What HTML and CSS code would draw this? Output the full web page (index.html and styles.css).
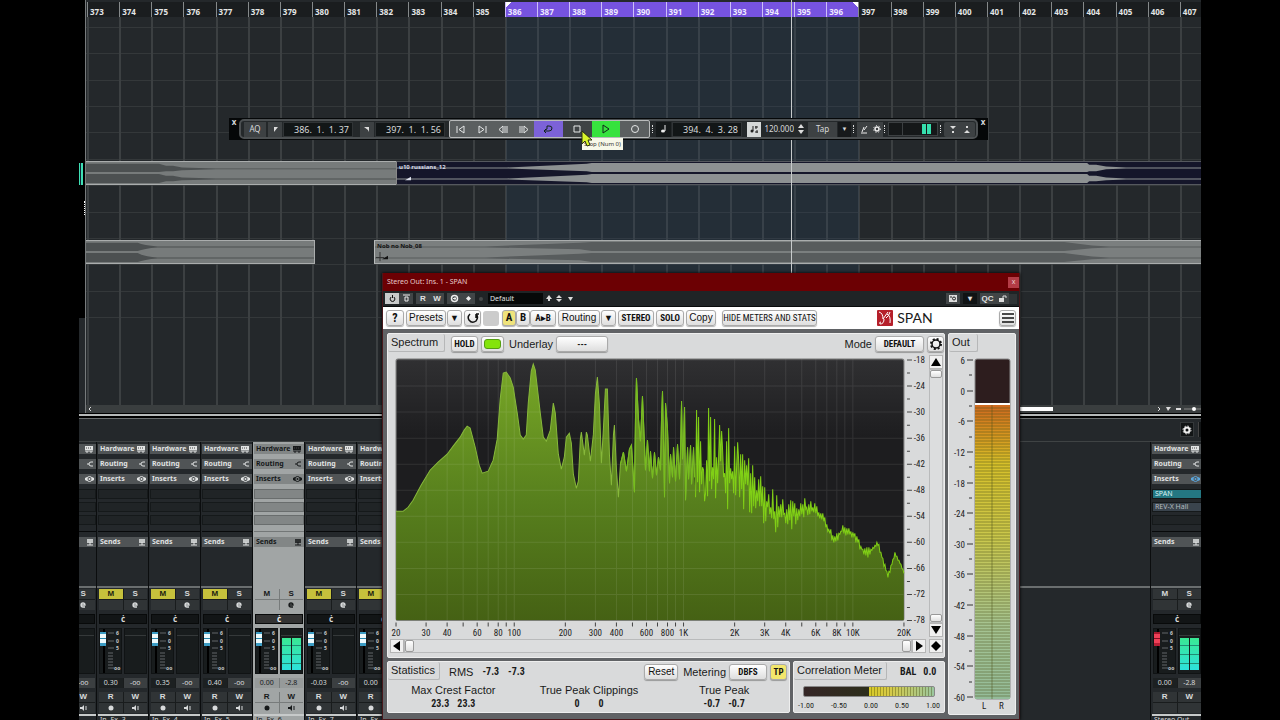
FILE: index.html
```html
<!DOCTYPE html>
<html lang="en">
<head>
<meta charset="utf-8">
<title>Project – Stereo Out</title>
<link rel="stylesheet" href="styles.css">
</head>
<body>
<main class="screen">
  <section class="arrange" aria-label="Arrangement">
    <div class="track-edge"><i class="edge-meter"></i><i class="edge-dots"></i></div>
    <div class="timeline">
      <div class="ruler" id="ruler"></div>
      <div class="lanes">
        <div class="bars" id="bars"></div>
        <div class="rows" id="rows"></div>
      </div>
      <div class="loop-area"></div>
      <div class="clip clip-a"><svg viewBox="0 0 310 24" preserveAspectRatio="none"><path fill="#4c5051" d="M0 2H73L80 4H87L96 6L130 7H310V8H130L96 9L87 10H80L73 11H0ZM0 13H73L80 15H87L96 17L130 18H310V19H130L96 20L87 21H80L73 23H0Z"/></svg></div>
      <div class="clip clip-b"><svg viewBox="0 0 805 24" preserveAspectRatio="none"><path fill="#8d9192" d="M0 6H110L190 2L195 1H691L693 3H700L710 5L730 6H805V7H730L710 8L700 10H693L691 11H195L190 10L110 7H0ZM0 18H110L190 14L195 13H691L693 15H700L710 17L730 18H805V19H730L710 20L700 21H693L691 23H195L190 22L110 19H0Z"/><path fill="#dfe3ee" d="M8 20L14 16V20Z"/></svg><span>u10 russians_12</span></div>
      <div class="clip clip-a clip-c"><svg viewBox="0 0 229 24" preserveAspectRatio="none"><path fill="#4c5051" d="M0 2H52Q58 5 72 6H229V7H72Q58 8 52 11H0ZM0 13H52Q58 17 72 18H229V19H72Q58 20 52 23H0Z"/></svg></div>
      <div class="clip clip-d"><svg viewBox="0 0 827 24" preserveAspectRatio="none"><path fill="#585c5d" d="M0 6H110L205 2L217 1H690L718 5L735 6H827V7H735L718 8L690 11H217L205 9L110 7H0ZM0 18H110L205 14L217 13H690L718 17L735 18H827V19H735L718 20L690 23H217L205 21L110 19H0Z"/><path d="M5 12V22M1 18H9" stroke="#333" fill="none"/><path fill="#111" d="M7 20L13 16V20Z"/></svg><span>Nob no Nob_08</span></div>
      <div class="playhead"></div>
      <div class="hscroll">
        <svg width="6" height="6"><path d="M4 1L2 3L4 5" stroke="#ddd" fill="none"/></svg>
        <i class="hthumb"></i>
        <svg width="44" height="6"><path d="M1 1L3 3L1 5" stroke="#ddd" fill="none"/><path d="M9 1H14L11 5ZM19 2H24V4H19Z" fill="#ddd"/><path d="M27 3H44" stroke="#888"/><circle cx="37" cy="3" r="2" fill="#fff"/></svg>
      </div>
    </div>

    <div class="transport">
      <button class="t-close" aria-label="Close left">x</button>
      <div class="t-body">
        <button class="t-btn w-aq">AQ</button>
        <button class="t-btn w-mark" aria-label="Left locator"><svg width="8" height="9"><path d="M2 2H7L3 7V2" fill="#ddd"/></svg></button>
        <input class="t-field" aria-label="Left position" value="386.  1.  1. 37">
        <button class="t-btn w-mark second" aria-label="Right locator"><svg width="8" height="9"><path d="M1 2H6V7L5 5Z" fill="#ddd"/></svg></button>
        <input class="t-field" aria-label="Right position" value="397.  1.  1. 56">
        <div class="t-group">
          <button aria-label="Previous"><svg width="10" height="9"><path d="M1 1V8M8 1V8L3 4.500Z"/></svg></button>
          <button aria-label="Next"><svg width="10" height="9"><path d="M9 1V8M2 1V8L7 4.500Z"/></svg></button>
          <button aria-label="Rewind"><svg width="10" height="9"><path d="M9 1V8M7 1V8M5 1V8L1 4.500Z"/></svg></button>
          <button aria-label="Forward"><svg width="10" height="9"><path d="M1 1V8M3 1V8M5 1V8L9 4.500Z"/></svg></button>
          <button class="wide cycle" aria-label="Cycle"><svg width="12" height="10"><path d="M2 7H7Q10 7 10 4Q10 2 7 2H5V5M5 5L3 6M2 7L4 9M2 7L4 5"/></svg></button>
          <button class="wide stop" aria-label="Stop"><svg width="10" height="10"><path d="M2 2H8V8H2Z"/></svg></button>
          <button class="wide play" aria-label="Play"><svg width="10" height="10"><path d="M2 1V9L8 5Z"/></svg></button>
          <button class="wide" aria-label="Record"><svg width="10" height="10"><circle cx="5" cy="5" r="3.500"/></svg></button>
        </div>
        <i class="dots"></i>
        <button class="t-btn w-note" aria-label="Note format"><svg width="8" height="10"><ellipse cx="3" cy="7" rx="2" ry="1.500" fill="#eee"/><path d="M5 1V7" stroke="#eee"/></svg></button>
        <input class="t-field" aria-label="Time" value="394.  4.  3. 28">
        <button class="t-btn tempo-icon" aria-label="Tempo track"><svg width="10" height="10"><circle cx="3" cy="7" r="1.500" fill="#222"/><path d="M4 2V7M6 3H9M7 2V5M6 8H9M8 6V9" stroke="#222"/></svg></button>
        <input class="tempo" aria-label="Tempo" value="120.000">
        <svg class="spin" width="6" height="10"><path d="M0 4L3 0L6 4ZM0 6L3 10L6 6Z" fill="#ddd"/></svg>
        <button class="t-btn w-tap">Tap</button>
        <button class="t-menu" aria-label="Tempo menu">▼</button>
        <i class="dots"></i>
        <button class="t-btn w-met" aria-label="Metronome"><svg width="10" height="10"><path d="M2 9H8M3 8L5 3M5 6L8 2" stroke="#eee" fill="none"/></svg></button>
        <button class="t-btn w-met" aria-label="Click settings"><svg width="10" height="10"><circle cx="5" cy="5" r="2" stroke="#eee" stroke-width="1.500" fill="none"/><circle cx="5" cy="5" r="3.500" stroke="#eee" stroke-dasharray="1 2" fill="none"/></svg></button>
        <i class="dots"></i>
        <div class="t-meter"><i></i><i></i></div>
        <i class="dots"></i>
        <div class="t-fold"><svg width="26" height="10"><path d="M3 2H9L6 5ZM5 7H7V9H5ZM17 9H23L20 6ZM19 2H21V4H19Z" fill="#ddd"/></svg></div>
      </div>
      <button class="t-close" aria-label="Close right">x</button>
    </div>
    <div class="tooltip">Stop (Num 0)</div>
    <svg class="cursor" width="12" height="17" viewBox="0 0 12 17"><path d="M1 1L11 10L7 10L9 15L6 16L4 11L1 14Z" fill="#d9f52a" stroke="#2a3010"/></svg>
  </section>

  <section class="mixer" aria-label="MixConsole">
    <div class="mix-bar"><button aria-label="Mixer settings"><svg width="10" height="10"><circle cx="5" cy="5" r="2.500" fill="none" stroke="#eee" stroke-width="2"/><circle cx="5" cy="5" r="4" fill="none" stroke="#eee" stroke-dasharray="1.500 1.640"/></svg></button><i></i></div>
    <div class="strips" id="strips"></div>
    <span class="below">Initial Delay</span>
  </section>

  <section class="plugin" aria-label="SPAN">
    <header class="titlebar"><h1>Stereo Out: Ins. 1 - SPAN</h1><button aria-label="Close">x</button></header>
    <div class="hostbar">
      <button class="on" aria-label="Power"><svg width="9" height="9"><path d="M3 3Q1 5 3 7Q5 8 6 7Q8 5 6 3M4.500 1V4" stroke="#111" fill="none"/></svg></button>
      <button aria-label="Bypass"><svg width="9" height="9"><path d="M1 1H8M3 3H6V7H3Z" stroke="#eee" fill="none"/></svg></button>
      <button class="push">R</button><button>W</button>
      <button class="push" aria-label="Side-chain"><svg width="9" height="9"><circle cx="4.500" cy="4.500" r="3" stroke="#eee" stroke-width="1.500" fill="none"/><path d="M3 4.500H6M5 3V6" stroke="#eee"/></svg></button>
      <button aria-label="Routing"><svg width="9" height="9"><path d="M2 4.500L4.500 2L7 4.500L4.500 7Z" fill="#eee"/></svg></button>
      <i class="lamp"></i>
      <select aria-label="Preset"><option>Default</option></select>
      <svg class="preset-arrows" width="30" height="9"><path d="M0 5L3 1L6 5H4V7H2V5ZM10 4L13 1L16 4ZM10 5H16L13 8Z" fill="#ddd"/><path d="M22 3H27L24.500 7Z" fill="#ddd"/></svg>
      <span class="grow"></span>
      <button aria-label="Snapshot"><svg width="10" height="9"><path d="M1 1H9V8H1Z" fill="#ddd"/><circle cx="6" cy="4.500" r="1.500" fill="none" stroke="#222"/><path d="M2 3H4" stroke="#222"/></svg></button>
      <button class="dark">▾</button>
      <button class="qc">QC</button><button aria-label="Lock"><svg width="9" height="9"><path d="M1 4H6V8H1Z" fill="#ddd"/><path d="M5 4V2H8V4" fill="none" stroke="#ddd"/></svg></button><i class="blank"></i>
    </div>
    <div class="toolbar">
      <button class="k w20">?</button>
      <button class="k plain presets">Presets</button><button class="k w14">▼</button>
      <button class="k w18 undo" aria-label="Undo"><svg width="14" height="14"><path d="M4 3Q1 6 3 9Q6 13 10 10Q13 6 10 3M10 3V7M10 3H13" stroke="#111" stroke-width="1.500" fill="none"/></svg></button><i class="gone"></i>
      <button class="k ab yellow">A</button><button class="k ab">B</button><button class="k w26">A▸B</button>
      <button class="k plain routing">Routing</button><button class="k w14">▼</button>
      <button class="k stereo">STEREO</button><button class="k solo">SOLO</button><button class="k plain copy">Copy</button>
      <button class="k hide">HIDE METERS AND STATS</button>
      <div class="brand"><svg width="16" height="16"><rect width="16" height="16" rx="1" fill="#b51f2a"/><path d="M2 2Q6 3 6 9L11 2M7 9Q7 14 3 14Q2 12 4 12M9 8Q12 6 13 2M10 4Q14 6 13 13" stroke="#fff" fill="none"/></svg><b>SPAN</b></div>
      <button class="k w18 menu" aria-label="Menu"><svg width="14" height="12"><path d="M1 2H13M1 6H13M1 10H13" stroke="#111" stroke-width="1.500"/></svg></button>
    </div>
    <div class="panels">
      <div class="left">
        <section class="panel spectrum">
          <div class="head">
            <h2 class="tab">Spectrum</h2>
            <button class="k hold">HOLD</button>
            <button class="k led" aria-label="Underlay on"><i></i></button>
            <label for="underlay">Underlay</label><button class="k" id="underlay">---</button>
            <span class="grow"></span>
            <label for="mode">Mode</label><button class="k" id="mode">DEFAULT</button>
            <button class="k gear" aria-label="Mode settings"><svg width="14" height="14"><circle cx="7" cy="7" r="4" stroke="#111" stroke-width="1.500" fill="none"/><circle cx="7" cy="7" r="5" stroke="#111" stroke-width="2" stroke-dasharray="2 1.930" fill="none"/></svg></button>
          </div>
          <div class="plotrow">
            <svg id="chart" viewBox="0 0 536 283" role="img" aria-label="Spectrum"></svg>
            <div class="vslide"><button aria-label="Up"><svg width="12" height="12"><path d="M1 10L6 2L11 10Z"/></svg></button><div class="rail"><i></i><i></i></div><button aria-label="Down"><svg width="12" height="12"><path d="M1 2L6 10L11 2Z"/></svg></button></div>
          </div>
          <div class="hslide"><button aria-label="Left"><svg width="12" height="12"><path d="M9 1L2 6L9 11Z"/></svg></button><div class="rail"><i></i><i></i></div><button aria-label="Right"><svg width="12" height="12"><path d="M3 1L10 6L3 11Z"/></svg></button><button aria-label="Reset view" class="dia"><svg width="12" height="12"><path d="M6 1L11 6L6 11L1 6Z"/></svg></button></div>
        </section>
        <div class="bottom">
          <section class="panel stats">
            <div class="head low"><h2 class="tab">Statistics</h2><span class="lbl">RMS</span><span class="num">-7.3</span><span class="num">-7.3</span><span class="grow"></span><button class="k plain reset">Reset</button><label for="dbfs">Metering</label><button class="k" id="dbfs">DBFS</button><button class="k yellow tp">TP</button></div>
            <div class="cols">
              <div class="c1"><p>Max Crest Factor</p><p class="num">23.3<span>23.3</span></p></div>
              <div class="c2"><p>True Peak Clippings</p><p class="num gap">0<span>0</span></p></div>
              <div class="c3"><p>True Peak</p><p class="num">-0.7<span>-0.7</span></p></div>
            </div>
          </section>
          <section class="panel corr">
            <div class="head low"><h2 class="tab">Correlation Meter</h2><span class="num">BAL</span><span class="num">0.0</span></div>
            <div class="cbar"><i></i></div>
            <div class="cscale"><span>-1.00</span><span>-0.50</span><span>0.00</span><span>0.50</span><span>1.00</span></div>
          </section>
        </div>
      </div>
      <section class="panel out">
        <h2 class="tab">Out</h2>
        <svg id="meter" viewBox="0 0 66 362" role="img" aria-label="Output level"></svg>
      </section>
    </div>
  </section>
</main>
<script src="app.js"></script>
</body>
</html>
```
FILE: styles.css
```css
* { box-sizing: border-box; }
body { margin: 0; background: #000; color: #d8dadb; font-family: "Noto Sans", "Open Sans", sans-serif; font-size: 8px; line-height: 10px; }
button, input, select { font: inherit; color: inherit; margin: 0; padding: 0; border: 0; background: none; border-radius: 0; min-width: 0; }
button { display: flex; align-items: center; justify-content: center; flex: none; white-space: nowrap; }
h1, h2, p { margin: 0; font-weight: 400; }
svg { display: block; flex: none; }
i { display: block; flex: none; }
.grow { flex: 1; }
.screen { position: relative; height: 100vh; margin: 0 79px; display: flex; flex-direction: column; overflow: hidden; background: #24282b; }

/* arrangement */
.arrange { position: relative; flex: none; height: 413px; display: flex; background: #24282b; }
.track-edge { width: 7px; border-right: 1px solid #777b7c; background: linear-gradient(#000 318px, #24282b 318px); padding-top: 163px; }
.edge-meter { width: 4px; height: 22px; border: solid #3fdfb4; border-width: 0 2px 0 1px; background: #123; }
.edge-dots { height: 14px; margin-top: 16px; border-right: 1px dotted #fff; }
.timeline { position: relative; flex: 1; min-width: 0; overflow: hidden; display: flex; flex-direction: column; }
.ruler { display: grid; grid-template-columns: repeat(35, 1fr); margin: 2px -11px 0 1px; height: 15px; background: #1a1d1f; font-weight: 700; color: #e4e6e6; }
.ruler span { border-left: 1px solid #85898a; padding: 5px 0 0 2px; }
.ruler .loop { background: #7653e0; border-color: #cdbff8; color: #efeaff; }
.ruler .loop-first { background: linear-gradient(135deg, #fff 4px, #7653e0 4px); }
.ruler .loop-last { background: linear-gradient(225deg, #fff 4px, #7653e0 4px); }
.lanes { position: relative; flex: 1; display: flex; flex-direction: column; }
.bars { position: absolute; inset: 0 -11px 0 1px; display: grid; grid-template-columns: repeat(35, 1fr); }
.bars span { border-left: 2px solid #3c4042; }
.rows { height: 291px; margin-top: 10px; display: grid; grid-template-rows: repeat(11, 1fr); border-bottom: 1px solid #34383a; }
.rows span { border-top: 1px solid #34383a; }
.loop-area { position: absolute; left: 420px; width: 353px; top: 17px; bottom: 8px; background: rgba(42, 72, 105, .2); }
.clip { position: absolute; height: 24px; overflow: hidden; }
.clip svg { width: 100%; height: 100%; }
.clip span { position: absolute; left: 2px; top: 1px; font-size: 6px; font-weight: 700; line-height: 8px; }
.clip-a { left: 0; top: 161px; width: 310px; background: #777b7b; border-block: 1px solid #aaadad; }
.clip-b { left: 310px; right: 0; top: 161px; background: #15162a; border-block: 1px solid #55585e; border-left: 1px solid #888; color: #d7d9e8; }
.clip-c { top: 240px; width: 229px; border-right: 1px solid #aaadad; }
.clip-d { left: 288px; right: 0; top: 240px; background: #7b7f7f; border-block: 1px solid #aaadad; border-left: 1px solid #b8bbbb; color: #111; }
.playhead { position: absolute; left: 705px; top: 0; bottom: 8px; width: 1px; background: #c7cacb; }
.hscroll { position: relative; height: 8px; display: flex; align-items: center; background: #3a3e3f; padding-left: 1px; }
.hthumb { flex: 1; height: 4px; margin-right: 104px; background: linear-gradient(90deg, transparent 50%, #fff 50%); }

/* transport */
.transport { position: absolute; left: 150px; top: 118px; width: 759px; height: 22px; display: flex; background: #050708; }
.t-close { width: 10px; align-self: flex-start; font-size: 8px; font-weight: 700; line-height: 8px; }
.t-body { flex: 1; min-width: 0; display: flex; align-items: center; gap: 1px; height: 20px; align-self: center; padding: 0 1px 0 3px; border: 2px solid #4c5052; border-radius: 5px; background: #24282a; }
.t-btn { height: 15px; background: #3d4143; }
.w-aq { width: 22px; margin-right: 1px; }
.w-mark { width: 14px; }
.second { margin-left: 6px; }
.t-field { width: 70px; height: 15px; background: #121617; border: 1px solid #303436; text-align: right; padding-right: 3px; font-size: 9px; }
.t-group { display: flex; width: 201px; height: 18px; margin-left: 3px; border: 1px solid #b9bbbb; background: #5b5f60; border-radius: 2px; flex: none; }
.t-group button { width: 21px; height: 16px; }
.t-group .wide { width: auto; flex: 1; }
.t-group path, .t-group circle { fill: none; stroke: #e6e8e8; }
.t-group .cycle { background: #7c62d8; }
.t-group .cycle path, .t-group .play path { stroke: #10241a; }
.t-group .stop { background: #3f4345; }
.t-group .play { background: #37e23e; }
.dots { height: 8px; width: 3px; border-left: 1px dotted #ddd; margin-left: 1px; }
.w-note { width: 15px; background: #15191a; }
.tempo-icon { width: 14px; background: #d5d8d8; margin-left: 4px; }
.tempo { width: 32px; text-align: right; font-size: 8px; }
.spin { margin: 0 3px; }
.w-tap { width: 29px; }
.t-menu { width: 13px; height: 15px; background: #16191b; font-size: 6px; }
.w-met { width: 13px; margin-right: -1px; }
.t-meter { display: flex; justify-content: flex-end; gap: 1px; width: 50px; height: 14px; padding: 1px 6px 1px 0; border: 1px solid #3c4042; background: linear-gradient(90deg, #151819 13px, #3c4042 13px 14px, #151819 14px); flex: none; }
.t-meter i { width: 4px; background: #36dfae; }
.t-fold { flex: 1; min-width: 0; height: 15px; display: flex; align-items: center; justify-content: center; background: #3d4143; border-radius: 2px; }
.tooltip { position: absolute; left: 503px; top: 138px; width: 41px; height: 12px; padding-left: 2px; background: #f7f8e9; color: #333; font-size: 6px; line-height: 12px; white-space: nowrap; }
.cursor { position: absolute; left: 502px; top: 130px; }

/* mixer */
.mixer { position: relative; flex: 1; display: flex; flex-direction: column; min-height: 0; border-top: 1px solid #000; box-shadow: inset 0 2px #b6b9b9, inset 0 4px #000, inset 0 5px #6a6e6f; }
.mix-bar { flex: none; height: 28px; padding-top: 8px; display: flex; justify-content: flex-end; gap: 4px; border-bottom: 1px solid #3f4344; }
.mix-bar button { width: 14px; height: 15px; background: #111415; border: 1px solid #34383a; }
.mix-bar i { width: 3px; height: 15px; background: #111415; border-left: 1px solid #444; }
.strips { flex: 1; display: flex; background: linear-gradient(transparent 144px, #6a6e6f 144px 146px, transparent 146px); }
.strip { width: 52px; flex: none; padding: 1px 2px 0 1px; border-left: 1px solid #0b0d0e; }
.strip.first { margin-left: -35px; }
.strip.master { width: 51px; margin-left: auto; padding-right: 0; overflow: hidden; }
.rack { height: 144px; padding-top: 1px; }
.rack-h { display: flex; align-items: center; justify-content: space-between; width: 50px; height: 10px; margin-bottom: 5px; padding: 0 2px; background: #505456; color: #e1e3e3; font-size: 7px; font-weight: 700; line-height: 10px; }
.first .rack-h { justify-content: flex-end; }
.slot { display: flex; width: 50px; height: 10px; margin-bottom: 3px; padding-left: 2px; border: 1px solid #15191a; background: #202426; font-size: 7px; line-height: 8px; color: #b4bbbf; }
.slot.span { background: #247782; color: #d8f2f4; }
.slot.rev { background: #3a444d; }
.rule { height: 1px; width: 50px; background: #07090a; margin: 6px 0 5px; }
.pair { display: grid; grid-template-columns: 1fr 1fr; gap: 1px; width: 48px; margin-left: 1px; background: #191c1d; }
.pair button, .pair span { height: 10px; display: flex; align-items: center; justify-content: center; background: #303436; font-size: 8px; font-weight: 700; }
.ms { margin-top: 2px; font-family: "Liberation Sans", sans-serif; }
.pair .lit { background: #c6c13c; color: #1c1e10; }
.pan { width: 48px; height: 10px; margin: 4px 0 4px 1px; background: #121516; border: 1px solid #080a0a; text-align: center; line-height: 8px; font-size: 8px; font-weight: 700; }
.levels { display: flex; gap: 2px; width: 48px; height: 46px; margin-left: 1px; }
.fader { display: flex; width: 23px; background: linear-gradient(90deg, #181c1d 3px, #000 3px 5px, #181c1d 5px); border: 1px solid #101314; }
.fader input { appearance: none; writing-mode: vertical-lr; direction: rtl; width: 6px; height: 43px; }
.fader input::-webkit-slider-thumb { appearance: none; width: 6px; height: 14px; background: linear-gradient(#3b9cc4 2px, #edfafc 2px 6px, #2486ad 6px 7px, #edfafc 7px 11px, #3b9cc4 11px); }
.master .fader input::-webkit-slider-thumb { background: linear-gradient(#a3172b 2px, #ee4057 2px 6px, #7f1020 6px 7px, #ee4057 7px 11px, #b51f35 11px); }
.vu { width: 23px; border: 1px solid #101314; background: linear-gradient(#181c1d 6px, #35393a 6px 7px, #181c1d 7px); }
.vu.hot { display: flex; align-items: flex-end; padding: 0 1px 3px; gap: 1px; }
.vu.hot i { flex: 1; height: 32px; background: linear-gradient(transparent 7px, #218b73 7px 8px, transparent 8px 16px, #218b73 16px 17px, transparent 17px 25px, #218b73 25px 26px, transparent 26px), linear-gradient(#39e893, #2de0dc); }
.vals { margin-top: 4px; }
.pair.vals span { font-weight: 400; font-size: 7px; background: #1c2021; }
.pair.vals span + span { background: #3b3f41; }
.rw { margin-top: 4px; font-family: "Liberation Sans", sans-serif; }
.name { width: 50px; margin-top: 1px; border-top: 2px solid #c7caca; padding-left: 2px; font-size: 7px; line-height: 8px; white-space: nowrap; }
.sel { background: #a1a5a5; color: #16191a; }
.sel .rack-h, .sel .slot { background: #828686; color: #16191a; border-color: #696d6d; }
.sel .pair button { background: #a1a5a5; }
.sel .pair { background: #777b7b; }
.sel .pair.vals span, .sel .pair.vals span + span { background: #969a9a; }
.sel .rule { background: #737777; }
.sel .pan, .sel .fader, .sel .vu { background-color: #333; color: #eee; }
.below { position: absolute; left: 682px; bottom: 0; font-size: 6px; line-height: 5px; }

/* plug-in window */
.plugin { position: absolute; left: 303px; top: 273px; width: 638px; display: flex; flex-direction: column; border: 1px solid #48181b; border-top: 0; background: #606265; box-shadow: 0 0 3px #000; color: #1a1a1a; font-family: "Liberation Sans", sans-serif; }
.titlebar { display: flex; align-items: center; justify-content: space-between; height: 18px; padding: 0 0 0 4px; background: #6c0003; color: #e7c9c9; font-family: "Noto Sans", sans-serif; }
.titlebar h1 { font-size: 7px; }
.titlebar button { width: 11px; height: 11px; background: #b43c46; font-size: 7px; line-height: 8px; }
.hostbar { display: flex; align-items: center; height: 16px; padding: 0 2px; background: #202426; color: #e1e3e3; border-bottom: 1px solid #090b0c; }
.hostbar button { width: 14px; height: 11px; background: #414547; font-size: 8px; font-weight: 700; }
.hostbar button.on { background: #c8caca; }
.hostbar .push { margin-left: 3px; }
.lamp { width: 4px; height: 4px; margin: 0 5px 0 4px; border-radius: 4px; background: #45494a; }
.hostbar select { appearance: none; width: 55px; height: 11px; padding-left: 2px; background: #070909; font-family: "Noto Sans", sans-serif; font-size: 7px; line-height: 10px; }
.preset-arrows { margin-left: 3px; }
.hostbar .dark { margin: 0 3px; background: #101314; }
.hostbar .qc { width: 15px; }
.blank { width: 8px; height: 10px; background: #303436; }
.toolbar { display: flex; align-items: center; height: 22px; padding: 0 3px 0 3px; background: #fff; }
.k { height: 16px; padding: 0; margin-right: 2px; border: 1px solid #aaa; border-radius: 3px; background: linear-gradient(#fff, #dedede); box-shadow: 0 1px 1px rgba(0, 0, 0, .3); color: #111; font-family: "Liberation Sans Narrow", "Roboto Condensed", "Open Sans Condensed", "Liberation Sans", sans-serif; font-size: 9px; font-weight: 700; line-height: 14px; }
.plain { font-family: "Liberation Sans", sans-serif; font-size: 10px; font-weight: 400; }
.toolbar .w20 { width: 18px; font-size: 12px; }
.w14 { width: 15px; }
.toolbar .ab { width: 14px; margin: 0; font-size: 11px; }
.w18 { width: 17px; }
.w26 { width: 26px; }
.presets { width: 40px; margin-right: 1px; }
.routing { width: 42px; margin-right: 1px; }
.gone { width: 16px; height: 15px; margin-right: 3px; border-radius: 3px; background: #ccc; }
.k.yellow { background: #efe37c; }
.stereo { width: 36px; }
.solo { width: 28px; }
.copy { width: 30px; }
.toolbar .hide { width: 95px; margin-left: 4px; font-size: 9px; font-weight: 400; }
.brand { flex: 1; display: flex; align-items: center; justify-content: center; gap: 4px; padding-right: 8px; }
.brand b { font-family: Lato, sans-serif; font-size: 14px; line-height: 18px; font-weight: 400; }
.toolbar .w18.menu { margin-right: 0; }
.panels { display: flex; gap: 3px; padding: 4px 3px 4px 4px; }
.left { flex: 1; min-width: 0; display: flex; flex-direction: column; gap: 3px; }
.panel { background: #d9dadb; border: 1px solid #eee; border-radius: 2px; font-size: 11px; line-height: 14px; }
.head { display: flex; align-items: center; height: 20px; gap: 3px; }
.tab { height: 18px; padding: 1px 4px 0 3px; margin-top: -2px; border: solid #b6b7b8; border-width: 0 1px 1px 0; border-radius: 2px; font-size: 11px; line-height: 14px; white-space: nowrap; }
.head .k { margin: 0; }
.hold { width: 27px; }
.spectrum .tab { width: 57px; margin-right: 3px; }
.led { width: 23px; }
.led i { width: 17px; height: 10px; border-radius: 3px; border: 1px solid #559e12; background: #84e40b; }
.head .led { margin-right: 2px; }
#underlay { width: 52px; }
#mode { width: 49px; }
.gear { width: 17px; }
.plotrow { display: flex; gap: 2px; padding: 1px 1px 0 2px; }
#chart { flex: 1; min-width: 0; }
.vslide { width: 14px; display: flex; flex-direction: column; margin-bottom: 2px; }
.vslide button, .hslide button { width: 14px; height: 14px; border: 1px solid #b5b5b5; background: #f0f0f0; }
.rail { flex: 1; display: flex; justify-content: space-between; border: 1px solid #b9babb; background: #dcddde; }
.vslide .rail { flex-direction: column; }
.rail i { border: 1px solid #999; border-radius: 2px; background: linear-gradient(#fff, #e0e0e0); }
.vslide .rail i { height: 8px; }
.hslide .rail i { width: 9px; }
.hslide { display: flex; height: 18px; padding: 0 1px 4px 2px; }
.dia { margin-left: 3px; }
.bottom { display: flex; gap: 3px; }
.stats { flex: 1; min-width: 0; height: 52px; }
.corr { width: 152px; flex: none; }
.low .tab { margin-right: 6px; }
.num { font-family: "Liberation Sans Narrow", "Roboto Condensed", "Liberation Sans", sans-serif; font-size: 10px; font-weight: 700; }
.stats .head .num { margin-left: 6px; }
.stats .reset { width: 34px; margin-right: 2px; }
#dbfs { width: 38px; }
.stats .tp { width: 17px; background: #f2e66c; margin-right: 2px; }
.cols { display: flex; text-align: center; margin-top: 2px; }
.cols p { line-height: 13px; white-space: nowrap; }
.cols .num span { margin-left: 8px; }
.cols .gap span { margin-left: 19px; }
.c1 { width: 131px; }
.c2 { width: 141px; }
.c3 { width: 130px; }
.corr .head .num { margin-left: 4px; }
.cbar { height: 11px; margin: 4px 9px 2px 9px; border: 1px solid #888; border-radius: 2px; background: linear-gradient(90deg, #352626, #2d2e1b 50%, transparent 50%), linear-gradient(90deg, #d8ca28 50%, #d8ca45 65%, #9bc7a0); }
.cbar i { margin-left: 50%; height: 9px; background: repeating-linear-gradient(90deg, transparent 0 2px, rgba(60, 60, 0, .35) 2px 3px); }
.cscale { display: flex; justify-content: space-between; margin: 0 4px; font-family: "Liberation Sans Narrow", "Roboto Condensed", sans-serif; font-size: 8px; line-height: 13px; }
.out { width: 68px; flex: none; }
.out .tab { width: 29px; margin-top: 0; }
#meter { width: 100%; }
svg text { font-family: "Liberation Sans Narrow", "Roboto Condensed", "Liberation Sans", sans-serif; font-size: 9px; fill: #222; }
.strip svg text { font-family: "Noto Sans", sans-serif; font-size: 5px; font-weight: 700; fill: #c8caca; }
```
FILE: app.js
```js
(() => {
const $ = id => document.getElementById(id);

// ruler and lanes
let ruler = '', bars = '';
for (let n = 373; n <= 407; n++) {
  const loop = n >= 386 && n < 397 ? ' loop' : '';
  const end = n === 386 ? ' loop-first' : n === 396 ? ' loop-last' : '';
  ruler += `<span class="bar${loop}${end}">${n}</span>`;
  bars += '<span></span>';
}
$('ruler').innerHTML = ruler;
$('bars').innerHTML = bars;
$('rows').innerHTML = '<span></span>'.repeat(11);

// mixer strips
const ico = {
  hw: '<svg width="10" height="8"><path d="M1 1H9V5H1Z" fill="currentColor"/><path d="M2 5V7H4V5M6 5V7H8V5" fill="none" stroke="currentColor"/><path d="M2 3H8" stroke="#444" stroke-dasharray="1 1"/></svg>',
  rt: '<svg width="8" height="8"><path d="M1 4H3M7 2H5Q3 2 3 4Q3 6 5 6H7" fill="none" stroke="currentColor"/></svg>',
  ins: c => `<svg width="9" height="8"><circle cx="4.500" cy="4" r="2.500" fill="none" stroke="${c}"/><path d="M0 3L2 2V6L0 5ZM9 3L7 2V6L9 5Z" fill="${c}"/><circle cx="4.500" cy="4" r="1" fill="${c}"/></svg>`,
  snd: '<svg width="8" height="8"><path d="M1 1H7V5H1Z" fill="currentColor" opacity=".8"/><path d="M1 7H7M4 4V7" stroke="currentColor"/></svg>',
  mon: '<svg width="9" height="8"><path d="M1 3H3L5 1V7L3 5H1Z" fill="currentColor"/><path d="M7 2V6" stroke="currentColor"/></svg>'
};
const strip = (cls, i, vol, peak, mute, name) => {
  const hot = peak !== '-oo', master = cls === 'master', first = cls === 'first';
  const t = s => first ? '' : s;
  return `<article class="strip ${cls}">
    <div class="rack">
      <div class="rack-h">${t('Hardware')}${ico.hw}</div>
      <div class="rack-h">${t('Routing')}${ico.rt}</div>
      <div class="rack-h">${t('Inserts')}${ico.ins(master ? '#5ba6dc' : 'currentColor')}</div>
      ${master ? '<div class="slot span">SPAN</div><div class="slot rev">REV-X Hall</div>' : '<div class="slot"></div><div class="slot"></div>'}
      <div class="slot"></div>
      <div class="rule"></div>
      <div class="rack-h">${t('Sends')}${ico.snd}</div>
    </div>
    <div class="pair ms"><button class="${mute ? 'lit' : ''}" aria-label="Mute">${t('M')}</button><button>S</button><button aria-label="Listen"></button><button aria-label="Edit channel"><svg width="8" height="8"><path d="M2 4H6Q6 2 4 2Q2 2 2 4Q2 6 4 6H6" fill="none" stroke="currentColor" stroke-width="1.3"/></svg></button></div>
    <div class="pan">${t('ċ')}</div>
    <div class="levels">
      <div class="fader"><input type="range" min="0" max="100" value="90" aria-label="Volume ${i}"><svg width="15" height="44"><path d="M2 4H8M2 12H8M2 19H8M2 24H7M2 27H7M2 30H7M2 33H7M2 36H7M2 39H8" stroke="#62676a"/>${t('<text x="10" y="6">6</text><text x="10" y="14">0</text><text x="10" y="21">5</text><text x="8" y="41">oo</text>')}</svg></div>
      <div class="vu ${hot ? 'hot' : ''}">${hot ? '<i></i><i></i>' : ''}</div>
    </div>
    <div class="pair vals"><span>${vol}</span><span>${peak}</span></div>
    <div class="pair rw"><button aria-label="Read">${t('R')}</button><button>W</button><button aria-label="Record enable">${master ? '' : '<svg width="8" height="8"><circle cx="4" cy="4" r="2.500" fill="currentColor"/></svg>'}</button><button aria-label="Monitor">${master ? '' : ico.mon}</button></div>
    <div class="name">${name}</div>
  </article>`;
};
$('strips').innerHTML = [
  ['first', 2, '', '-oo', 1, ''], ['', 3, '0.30', '-oo', 1, 'In. Ex.  3'],
  ['', 4, '0.35', '-oo', 1, 'In. Ex.  4'], ['', 5, '0.40', '-oo', 1, 'In. Ex.  5'],
  ['sel', 6, '0.00', '-2.8', 0, 'In. Ex.  6'], ['', 7, '-0.03', '-oo', 1, 'In. Ex.  7'],
  ['', 8, '0.00', '-oo', 1, 'In. Ex.  8'], ['master', 9, '0.00', '-2.8', 0, 'Stereo Out']
].map(a => strip(...a)).join('');

// spectrum chart: 20 Hz – 20 kHz on a log axis, -18 to -78 dB
const X0 = 6, Y0 = 4, W = 507, H = 261;
const fx = f => X0 + W * Math.log10(f / 20) / 3;
const dy = d => Y0 + 1 + (-18 - d) * 260 / 60;
const low = [[0,152],[7,152],[12,148],[17,141],[25,126],[34,111],[42,103],[51,95],[57,87],[64,78],[68,71],[71,67],[74,69],[79,88],[83,106],[86,114],[92,112],[97,101],[101,80],[104,40],[107,14],[110,13],[114,19],[117,28],[121,54],[124,76],[127,80],[130,76],[132,44],[135,12],[137,5],[139,11],[144,54],[147,78],[150,82],[154,71],[157,44],[159,54],[162,95],[165,110],[168,98],[170,78],[173,74],[175,84],[177,115],[180,129],[182,122],[184,80],[185,73],[188,96],[190,73],[191,76],[194,102],[197,75],[199,35],[201,18],[203,45],[205,104],[207,70],[209,30],[211,30],[213,95],[215,126],[217,76],[218,66],[220,110],[222,138],[224,105],[227,93],[230,112],[233,90],[235,86],[238,133],[239,60],[240,19],[242,60],[244,82],[246,37],[248,85],[249,111],[251,81],[253,112],[254,92],[256,119],[258,93],[260,116],[262,98],[264,111],[265,60],[266,32],[267,80],[268,138],[269,44],[271,70],[273,124],[274,95],[276,118],[277,88],[279,122],[281,85],[283,120],[284,90],[285,42],[286,100],[287,82],[288,48],[289,141],[291,88],[292,120],[294,86],[295,125],[297,88],[298,118]];
const peaks = [[299,78],[323,82],[332,80],[341,88],[354,100],[366,120],[377,131],[397,137],[409,138],[419,144],[431,161],[436,174],[447,164],[457,170],[467,188],[481,182],[491,214],[498,192],[507,211]];
const dips = [[299,138],[323,148],[341,148],[354,154],[366,163],[377,174],[392,174],[400,166],[409,158],[419,154],[431,174],[436,186],[447,175],[457,182],[471,202],[481,187],[491,221],[498,195],[507,214]];
const at = (t, x) => {
  let i = 1;
  while (i < t.length - 1 && t[i][0] < x) i++;
  const [a, b] = t[i - 1], [c, d] = t[i];
  return b + (d - b) * (x - a) / (c - a);
};
let seed = 977;
const rnd = () => {
  seed = (seed * 16807) % 2147483647;
  return seed / 2147483647;
};
const spikes = { 300: 51, 302: 58, 312: 49, 314: 58, 323: 66, 325: 72, 332: 69, 308: 142, 331: 150, 341: 83, 318: 60 };
const noise = [];
for (let x = 299; x <= 507; x++) {
  const t = at(peaks, x), b = at(dips, x);
  noise.push([x, spikes[x] || Math.round(x % 2 ? b - (b - t) * rnd() * .5 : t + (b - t) * rnd() * .5)]);
}
const line = p => p.map(([x, y]) => `${x + X0} ${y + Y0}`).join('L');
let c = `<defs><linearGradient id="g" x2="0" y2="1"><stop stop-color="#79a927"/><stop offset=".55" stop-color="#577f1d"/><stop offset="1" stop-color="#456114"/></linearGradient><linearGradient id="bg" x2="0" y2="1"><stop stop-color="#303032"/><stop offset=".3" stop-color="#1d1d1f"/></linearGradient></defs>`;
c += `<rect x="${X0}" y="${Y0}" width="${W}" height="${H}" rx="2" fill="url(#bg)" stroke="#777"/>`;
const area = `M${X0} ${Y0 + H}L${line(low.concat(noise))}L${X0 + W} ${Y0 + H}Z`;
c += `<clipPath id="cp"><path d="${area}"/></clipPath><g clip-path="url(#cp)"><rect x="${X0}" y="${Y0}" width="${W}" height="${H}" fill="url(#g)"/></g>`;
let v = '', ticks = '', labels = '';
const named = { 20: '20', 30: '30', 40: '40', 60: '60', 80: '80', 100: '100', 200: '200', 300: '300', 400: '400', 600: '600', 800: '800', 1000: '1K', 2000: '2K', 3000: '3K', 4000: '4K', 6000: '6K', 8000: '8K', 10000: '10K', 20000: '20K' };
for (const m of [10, 100, 1000, 10000]) for (let k = 1; k < 10; k++) {
  const f = m * k;
  if (f < 20 || f > 20000) continue;
  const x = Math.round(fx(f));
  v += `M${x} ${Y0}V${Y0 + H}`;
  ticks += `M${x} 267V271`;
  if (named[f]) labels += `<text x="${x}" y="280" text-anchor="middle">${named[f]}</text>`;
}
let h = '';
for (let d = -18; d >= -78; d -= 3) {
  const y = Math.round(dy(d));
  ticks += d % 6 ? `M516 ${y}H519` : `M516 ${y}H521`;
  if (d % 6 === 0) {
    h += `M${X0} ${y}H${X0 + W}`;
    labels += `<text x="534" y="${y + 3}" text-anchor="end">${d}</text>`;
  }
}
c += `<path d="${v}${h}" stroke="#fff" stroke-opacity=".09" fill="none"/>`;
c += `<path d="M${line(low)}" stroke="#87b83b" fill="none"/><path d="M${line(noise)}" stroke="#80cf16" fill="none"/><path d="M${line(low.filter(p => p[0] > 222))}" stroke="#76bd1e" fill="none"/>`;
c += `<path d="${ticks}" stroke="#444" fill="none"/>${labels}`;
$('chart').innerHTML = c;

// output meter, 6 to -60 dB
let m = `<defs><linearGradient id="mg" x2="0" y2="1"><stop stop-color="#cf681f"/><stop offset=".1" stop-color="#d6941f"/><stop offset=".2" stop-color="#d7c02a"/><stop offset=".45" stop-color="#cbc84c"/><stop offset=".75" stop-color="#a5c391"/><stop offset="1" stop-color="#94bc9a"/></linearGradient></defs>
<rect x="26" y="7" width="35" height="340" rx="2" fill="#2d1d1e" stroke="#888"/><rect x="26" y="53" width="35" height="294" fill="url(#mg)"/><path d="M26 52H61" stroke="#fff" stroke-width="2"/>`;
let seg = '', mt = '';
for (let y = 56; y < 347; y += 3) seg += `M26 ${y}H61`;
for (let d = 6; d >= -60; d -= 3) {
  const y = Math.round(8 + (6 - d) * 337 / 66);
  mt += d % 6 ? `M20 ${y}H23` : `M18 ${y}H24`;
  if (d % 6 === 0) m += `<text x="16" y="${y + 4}" text-anchor="end">${d}</text>`;
}
m += `<path d="${seg}M43 53V347" stroke="#4b511a" stroke-opacity=".5"/><path d="${mt}" stroke="#333"/><text x="33" y="357">L</text><text x="50" y="357">R</text>`;
$('meter').innerHTML = m;
})();
```
